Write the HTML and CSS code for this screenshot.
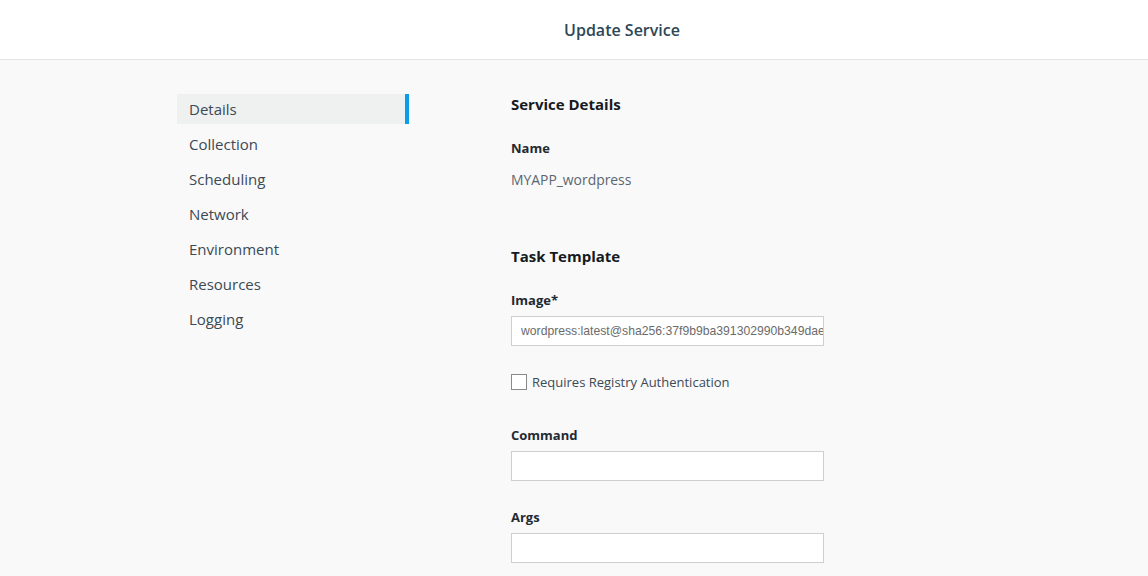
FILE: index.html
```html
<!DOCTYPE html>
<html>
<head>
<meta charset="utf-8">
<link rel="stylesheet" href="styles.css">
</head>
<body>
<header class="topbar"><h1 class="title">Update Service</h1></header>
<main class="layout">
  <nav class="sidenav">
    <a class="nav-item active">Details</a>
    <a class="nav-item">Collection</a>
    <a class="nav-item">Scheduling</a>
    <a class="nav-item">Network</a>
    <a class="nav-item">Environment</a>
    <a class="nav-item">Resources</a>
    <a class="nav-item">Logging</a>
  </nav>
  <section class="content">
    <h2 class="section-title">Service Details</h2>
    <div class="label label-first">Name</div>
    <div class="value">MYAPP_wordpress</div>
    <h2 class="section-title section-gap">Task Template</h2>
    <div class="label label-first">Image*</div>
    <input class="field field-image" type="text" value="wordpress:latest@sha256:37f9b9ba391302990b349dae1234567890">
    <label class="check-row"><span class="checkbox"></span>Requires Registry Authentication</label>
    <div class="label label-cmd">Command</div>
    <input class="field" type="text">
    <div class="label label-args">Args</div>
    <input class="field" type="text">
  </section>
</main>
</body>
</html>
```
FILE: styles.css
```css
* { box-sizing: border-box; }
html, body { margin: 0; padding: 0; }
body {
  background: #f9f9f9;
  font-family: "Open Sans", "Noto Sans", sans-serif;
  color: #36424d;
  height: 576px;
  overflow: hidden;
}
.topbar {
  height: 60px;
  background: #ffffff;
  border-bottom: 1px solid #e3e3e3;
  display: flex;
  align-items: center;
  justify-content: center;
}
.title {
  margin: 0;
  font-size: 16px;
  font-weight: 600;
  color: #2d4757;
  line-height: 20px;
  padding-left: 96px;
}
.layout {
  display: flex;
  padding: 34px 0 0 177px;
  gap: 102px;
}
.sidenav {
  width: 232px;
  display: flex;
  flex-direction: column;
  gap: 5px;
}
.nav-item {
  height: 30px;
  display: flex;
  align-items: center;
  padding-left: 12px;
  font-size: 15px;
  color: #3b4a55;
}
.nav-item.active {
  background: #eff0f0;
  border-right: 4px solid #0a9ee8;
}
.content {
  width: 313px;
  display: flex;
  flex-direction: column;
  align-items: flex-start;
}
.section-title {
  margin: 0;
  font-size: 15px;
  font-weight: 700;
  line-height: 20px;
  color: #151a1e;
}
.section-gap { margin-top: 56px; }
.label {
  font-size: 13px;
  font-weight: 700;
  line-height: 18px;
  color: #1f2a33;
}
.label-first { margin-top: 25px; }
.label-cmd { margin-top: 36px; }
.label-args { margin-top: 27px; }
.value {
  margin-top: 13px;
  font-size: 13.9px;
  line-height: 20px;
  color: #5b6670;
}
.field {
  margin-top: 7px;
  width: 313px;
  height: 30px;
  border: 1px solid #cfcfcf;
  background: #ffffff;
  padding: 0 0 0 9px;
  font-family: "Liberation Sans", Arial, sans-serif;
  font-size: 12.2px;
  color: #6b6b6b;
  outline: none;
}
.check-row {
  margin-top: 28px;
  display: flex;
  align-items: center;
  gap: 5px;
  font-size: 13px;
  color: #3b4a55;
  line-height: 16px;
}
.checkbox {
  width: 16px;
  height: 16px;
  border: 1px solid #8a8a8a;
  background: #ffffff;
}
```
